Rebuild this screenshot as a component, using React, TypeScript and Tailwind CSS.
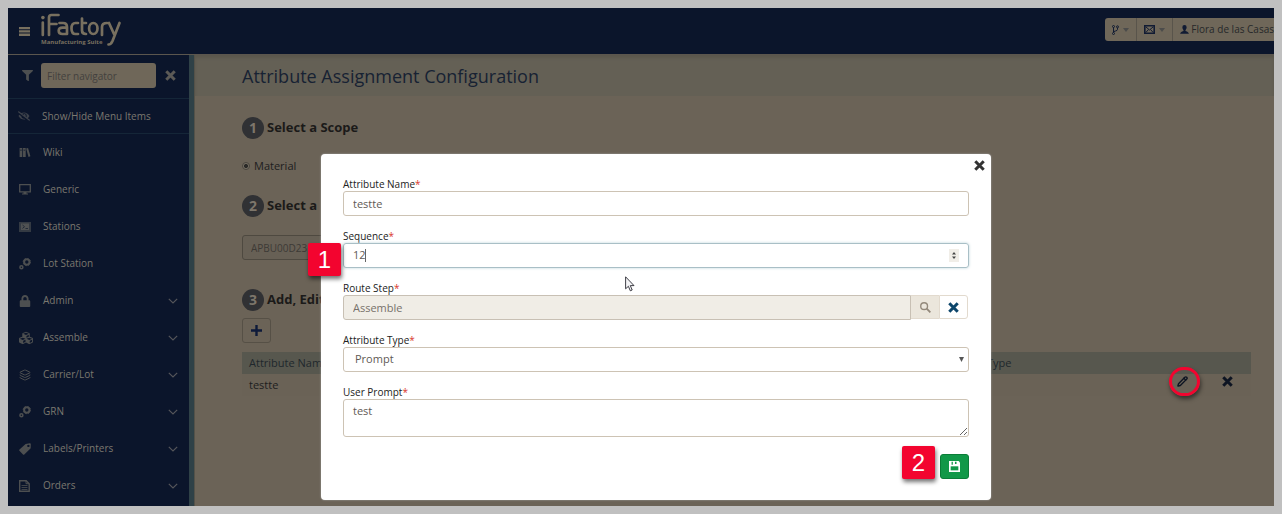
import type { ReactNode } from "react";
import { FaFilter, FaEyeSlash, FaLock, FaCubes } from "react-icons/fa";
import { Layers, Pencil } from "lucide-react";

function BooksIcon() {
  return (
    <svg viewBox="0 0 12 10" className="h-[9px] w-3" fill="currentColor" aria-hidden="true">
      <path d="M0 0h3v10H0zM3.800 0h3v10h-3z" />
      <path d="M7.300 .6 9.400 0 12 9.300 9.900 10z" />
      <path d="M.6 2h1.800v.8H.6zM4.400 2h1.800v.8H4.400z" fill="#0b152b" />
    </svg>
  );
}

function MonitorIcon() {
  return (
    <svg viewBox="0 0 12 11" className="h-[11px] w-3" aria-hidden="true">
      <path d="M.7 .7h10.600v7.100H.7z" fill="none" stroke="currentColor" strokeWidth="1.300" />
      <path d="M4.500 8h3v1.500H9v1H3v-1h1.500z" fill="currentColor" />
    </svg>
  );
}

function TerminalIcon() {
  return (
    <svg viewBox="0 0 12 10" className="h-[10px] w-3" aria-hidden="true">
      <path d="M0 0h12v10H0z" fill="#343a43" />
      <path d="M2 1.500h8v6.500H2z" fill="#505253" />
      <path d="M3.500 3l2 1.700-2 1.700M6.500 6.500h2.500" stroke="#222a38" fill="none" />
    </svg>
  );
}

function FileIcon() {
  return (
    <svg viewBox="0 0 11 12" className="h-3 w-[11px]" fill="none" stroke="currentColor" aria-hidden="true">
      <path d="M.7 .7h6.500l3 3v7.600H.7z" strokeWidth="1.400" />
      <path d="M7 .7v3h3" />
      <path d="M2.500 5.500h6M2.500 7.500h6M2.500 9.500h6" strokeWidth=".8" />
    </svg>
  );
}

function TagIcon() {
  return (
    <svg viewBox="0 0 12 12" className="size-3" fill="currentColor" aria-hidden="true">
      <path fillRule="evenodd" d="M6.600 .9 10.800 .3Q11.700 .2 11.800 1.100L11.700 5.300 5.300 11.400Q4.600 12 4 11.400L.4 7.800Q-.1 7.200 .5 6.500zM9.400 1.700a1.200 1.200 0 1 0 .01 0z" />
    </svg>
  );
}

function GearsIcon() {
  return (
    <svg viewBox="0 0 12 12" className="size-3" fill="none" stroke="currentColor" aria-hidden="true">
      <circle cx="7.800" cy="4" r="2.700" strokeWidth="2" />
      <circle cx="7.800" cy="4" r="3.700" strokeWidth=".8" strokeDasharray="1.500 1.400" />
      <circle cx="2.400" cy="9.300" r="1.500" strokeWidth="1.500" />
    </svg>
  );
}

function UserIcon() {
  return (
    <svg viewBox="0 0 10 10" className="size-[9px] text-[#111b33]" fill="currentColor" aria-hidden="true">
      <path d="M5 0q2.400 0 2.400 2.600 0 2-1.300 3.200v.8Q9.800 7.600 9.800 9.800H.2Q.2 7.600 3.900 6.600v-.8Q2.600 4.600 2.600 2.600 2.600 0 5 0z" />
    </svg>
  );
}

function Cross({ className }: { className: string }) {
  return (
    <svg viewBox="0 0 12 12" className={className} fill="none" stroke="currentColor" strokeWidth="3.300" aria-hidden="true">
      <path d="M1.400 1.400l9.200 9.200M10.600 1.400l-9.200 9.200" />
    </svg>
  );
}

function Chevron() {
  return (
    <svg viewBox="0 0 10 6" className="h-[6px] w-[10px] text-[#55565a]" fill="none" stroke="currentColor" strokeWidth="1.200" aria-hidden="true">
      <path d="M.8 .8 5 5 9.200 .8" />
    </svg>
  );
}

function Caret() {
  return (
    <svg viewBox="0 0 6 4" className="h-1 w-[6px]" fill="#4c4c4b" aria-hidden="true">
      <path d="M0 0h6L3 4z" />
    </svg>
  );
}

function Logo() {
  return (
    <svg viewBox="0 0 82 36" className="h-9 w-[82px]" aria-label="iFactory Manufacturing Suite" role="img">
      <g fill="none" stroke="#78705f" strokeWidth="2.700" strokeLinecap="round" strokeLinejoin="round">
        <path d="M1.800 9.500V22M8 22V4.500Q8 2 10.500 2H17.500M8 11h7.500" />
        <path d="M18.500 10h3.500q4 0 4 4V21h-4.500q-3.800 0-3.800-3.200t3.800-3.200H26" />
        <path d="M37 10h-2.500q-4 0-4 5.500t4 5.500H37" />
        <path d="M41 5.500v12q0 3.500 4 3.500M41 10h4" />
        <ellipse cx="52.300" cy="15.500" rx="4.200" ry="5.500" />
        <path d="M61 22v-8q0-4 5-4M68 10l5 11M78.500 10 71.500 28q-1.500 3.500-4 3.500" />
      </g>
      <circle cx="1.900" cy="4.600" r="1.800" fill="#78705f" />
      <text x="0" y="31" fill="#78705f" fontSize="6" fontWeight="700" fontFamily="Open Sans, sans-serif">Manufacturing Suite</text>
    </svg>
  );
}

const menu: { label: string; icon: ReactNode; group?: boolean }[] = [
  { label: "Wiki", icon: <BooksIcon /> },
  { label: "Generic", icon: <MonitorIcon /> },
  { label: "Stations", icon: <TerminalIcon /> },
  { label: "Lot Station", icon: <GearsIcon /> },
  { label: "Admin", icon: <FaLock className="size-3" />, group: true },
  { label: "Assemble", icon: <FaCubes className="size-[14px]" />, group: true },
  { label: "Carrier/Lot", icon: <Layers className="size-3" />, group: true },
  { label: "GRN", icon: <GearsIcon />, group: true },
  { label: "Labels/Printers", icon: <TagIcon />, group: true },
  { label: "Orders", icon: <FileIcon />, group: true },
];

function Sidebar() {
  return (
    <nav className="w-[181px] shrink-0 text-[10px] font-medium text-[#7b786f]">
      <div className="flex h-11 items-center border-b border-[#152638] pb-[2px] pl-[14px] text-[#4d4f50]">
        <FaFilter className="size-[11px]" />
        <input
          aria-label="Filter navigator"
          placeholder="Filter navigator"
          className="ml-2 h-[25px] w-[115px] rounded-[3px] bg-[#6f6759] px-[6px] text-[10px] font-normal placeholder:text-[#43413e]"
        />
        <button aria-label="Clear filter" className="ml-[9px] text-[#5c5a56]"><Cross className="size-[11px]" /></button>
      </div>
      <a href="#items" className="flex h-[35px] items-center border-b border-[#152638] pl-[10px]">
        <span className="w-6 text-[#3c414a]"><FaEyeSlash className="size-3" /></span>
        Show/Hide Menu Items
      </a>
      <ul>
        {menu.map((m) => (
          <li key={m.label}>
            <a href={"#" + m.label} className="flex h-[37px] items-center pr-[11px] pl-[11px]">
              <span className="w-6 text-[#4d4f50]">{m.icon}</span>
              <span className="flex-1">{m.label}</span>
              {m.group && <Chevron />}
            </a>
          </li>
        ))}
      </ul>
    </nav>
  );
}

function Step({ n, children }: { n: number; children: ReactNode }) {
  return (
    <h2 className="flex h-[22px] items-center gap-[3px] text-[13px] font-bold text-[#1b1a19]">
      <span className="flex size-[22px] items-center justify-center rounded-full bg-[#303134] text-sm text-[#7d766b]">{n}</span>
      {children}
    </h2>
  );
}

function Main() {
  return (
    <main className="min-w-0 flex-1 bg-[#6b6357] text-[11px] text-[#1d1d1e]">
      <h1 className="flex h-[41px] items-center bg-[#646055] pl-[47px] text-lg text-[#172233] shadow-[inset_0_3px_3px_#5b574d]">
        Attribute Assignment Configuration
      </h1>
      <div className="pt-[21px] pr-[23px] pl-[47px]">
        <Step n={1}>Select a Scope</Step>
        <label className="mt-[17px] flex h-5 items-center gap-1">
          <input type="radio" defaultChecked className="size-2 appearance-none rounded-full border border-[#4a463f] bg-[radial-gradient(#2b2a28_40%,#777064_55%)]" />
          Material
        </label>
        <div className="mt-[19px]"><Step n={2}>Select a</Step></div>
        <input aria-label="Material number" readOnly value="APBU00D23" className="mt-[18px] block h-[25px] w-[200px] rounded-[3px] border border-[#4e4940] bg-[#676055] px-2 text-[10px] text-[#3d3a35]" />
        <div className="mt-[29px]"><Step n={3}>Add, Edit</Step></div>
        <button aria-label="Add attribute" className="mt-[7px] flex h-[25px] w-[29px] items-center justify-center rounded-[3px] border border-[#565046] text-[#0e1a3a]">
          <svg viewBox="0 0 12 12" className="size-[11px]" stroke="currentColor" strokeWidth="2.600" aria-hidden="true"><path d="M6 0v12M0 6h12" /></svg>
        </button>
        <table className="mt-[9px] w-full table-fixed text-left">
          <thead className="bg-[#57574e] text-[#20272c]">
            <tr className="h-[22px]">
              <th className="pl-[7px] font-normal">Attribute Name</th>
              <th className="w-[174px] font-normal">Type</th>
              <th className="w-[42px]" />
              <th className="w-12" />
            </tr>
          </thead>
          <tbody>
            <tr className="h-[22px] bg-[#6a6256]">
              <td className="pl-[7px]">testte</td>
              <td />
              <td>
                <div className="relative flex h-[22px] items-center justify-center">
                  <button aria-label="Edit testte" className="-mt-2"><Pencil className="size-[11px] text-[#0d1422]" strokeWidth={3} /></button>
                  <span className="absolute -top-[7px] left-2 h-[29px] w-[31px] rounded-full border-3 border-[#f3042f] shadow-[1px_3px_4px_rgba(0,0,0,0.5)]" />
                </div>
              </td>
              <td>
                <button aria-label="Delete testte" className="mx-auto -mt-2 block text-[#0d1422]"><Cross className="size-[11px]" /></button>
              </td>
            </tr>
          </tbody>
        </table>
      </div>
    </main>
  );
}

function Field({ id, label, children }: { id: string; label: string; children: ReactNode }) {
  return (
    <div>
      <label htmlFor={id} className="block text-[10px] leading-[14px] text-[#222]">
        {label}<span className="text-[#d9372c]">*</span>
      </label>
      {children}
    </div>
  );
}

function Badge({ className, children }: { className: string; children: ReactNode }) {
  return (
    <span className={"absolute flex h-[33px] w-[33px] items-center justify-center rounded-[2px] bg-[#f3042f] font-['Liberation_Sans',sans-serif] text-2xl text-white shadow-[1px_3px_4px_rgba(0,0,0,0.55)] " + className}>
      {children}
    </span>
  );
}

const control = "block h-[25px] w-full rounded-[3px] border border-[#cdc3b4] bg-white px-[9px] text-[11px] text-[#5f5a55] outline-none";

function AttributeDialog() {
  return (
    <form role="dialog" aria-label="Edit attribute" className="absolute top-[146px] left-[313px] w-[670px] rounded-[4px] bg-white px-[22px] pt-[23px] pb-[21px] shadow-[0_0_2px_#aaa]">
      <button type="button" aria-label="Close" className="absolute top-[6px] right-[6px] text-[#333]"><Cross className="size-[11px]" /></button>
      <div className="flex flex-col gap-[13px]">
        <Field id="name" label="Attribute Name">
          <input id="name" className={control} defaultValue="testte" />
        </Field>
        <Field id="sequence" label="Sequence">
          <div className="relative flex h-[25px] items-center rounded-[3px] border border-[#a9bfc6] pr-[9px] pl-[9px] shadow-[0_0_3px_#bcd3da]">
            <input id="sequence" inputMode="numeric" className="w-3 text-[11px] text-[#5f5a55] outline-none" defaultValue="12" />
            <span className="h-[13px] w-px bg-[#666]" />
            <span className="ml-auto flex h-[13px] w-[10px] items-center justify-center bg-[#f1eee8]">
              <svg viewBox="0 0 4 7" className="h-[7px] w-1" fill="#444" aria-hidden="true"><path d="M0 2.500 2 0l2 2.500zM0 4.500h4L2 7z" /></svg>
            </span>
          </div>
        </Field>
        <Field id="route" label="Route Step">
          <div className="flex h-[25px]">
            <input id="route" readOnly className="h-[25px] min-w-0 flex-1 rounded-l-[3px] border border-[#c8c0b4] bg-[#f0ede6] px-[9px] text-[11px] text-[#77716a] outline-none" defaultValue="Assemble" />
            <button type="button" aria-label="Search route step" className="flex h-6 w-7 items-center justify-center border-y border-[#e2dace] bg-[#ebe6dc] text-[#93897b]">
              <svg viewBox="0 0 12 12" className="size-[11px]" fill="none" stroke="currentColor" strokeWidth="1.500" aria-hidden="true"><circle cx="4.500" cy="4.500" r="3.700" /><path d="M7.300 7.300 11.300 11.300" strokeWidth="2" /></svg>
            </button>
            <button type="button" aria-label="Clear route step" className="mr-px flex h-6 w-[29px] items-center justify-center rounded-r-[3px] border border-[#e2dace] text-[#0d466b]">
              <Cross className="size-[11px]" />
            </button>
          </div>
        </Field>
        <Field id="type" label="Attribute Type">
          <div className="relative">
            <select id="type" className={control + " appearance-none pl-[11px]"} defaultValue="Prompt"><option>Prompt</option></select>
            <svg viewBox="0 0 5 5" className="pointer-events-none absolute top-[10px] right-[5px] size-[5px]" fill="#555" aria-hidden="true"><path d="M0 0h5L2.500 5z" /></svg>
          </div>
        </Field>
        <Field id="prompt" label="User Prompt">
          <textarea id="prompt" className="block h-[38px] w-full resize-y rounded-[3px] border border-[#cdc3b4] px-[9px] py-[3px] text-[11px] leading-[15px] text-[#5f5a55] outline-none" defaultValue="test" />
        </Field>
      </div>
      <div className="mt-[17px] flex justify-end">
        <button aria-label="Save" className="flex h-[25px] w-[29px] items-center justify-center rounded-[3px] border border-[#0b7d38] bg-[#119848]">
          <svg viewBox="0 0 12 12" className="size-[11px]" aria-hidden="true">
            <path d="M0 0h10.500L12 1.500V12H0z" fill="#fff" />
            <path d="M1.800 5.800h8.400v4.400H1.800z" fill="#119848" />
            <path d="M2.800 .8h1.400v3.200H2.800zM6.500 .8h1.700v2.400H6.500z" fill="#119848" />
          </svg>
        </button>
      </div>
      <Badge className="top-[89px] -left-[13px]">1</Badge>
      <Badge className="right-[56px] bottom-[21px]">2</Badge>
      <svg viewBox="0 0 10 16" className="absolute top-[122px] left-[304px] h-4 w-[10px]" aria-hidden="true">
        <path d="M.6 .8v12l2.800-2.500 1.900 4.500 1.900-.8-1.900-4.400H9z" fill="#f4f4f6" stroke="#2a2a33" strokeWidth=".9" />
      </svg>
    </form>
  );
}

export default function App() {
  const toolButton = "flex h-full items-center justify-center gap-1 border-r border-[#59544b]";
  return (
    <div className="h-screen bg-[#c0c0c0] p-2 font-['Open_Sans',sans-serif]">
      <div className="relative flex h-full flex-col overflow-hidden bg-[#0b152b]">
        <header className="flex h-[47px] shrink-0 items-center border-b border-[#5b564e] pl-[11px]">
          <button aria-label="Toggle menu" className="mr-[11px] text-[#78705f]">
            <svg viewBox="0 0 11 9" className="h-[9px] w-[11px]" fill="currentColor" aria-hidden="true"><path d="M0 0h11v2.300H0zM0 3.300h11v2.300H0zM0 6.600h11V9H0z" /></svg>
          </button>
          <Logo />
          <div className="mb-[3px] ml-auto flex h-[23px] overflow-hidden rounded-l-[3px] bg-[#6f6759] text-[10px] whitespace-nowrap text-[#262829]">
            <button aria-label="Branches" className={toolButton + " w-8"}>
              <svg viewBox="0 0 7 10" className="h-[10px] w-[7px]" fill="none" stroke="#111b33" aria-hidden="true"><circle cx="1.500" cy="1.500" r="1" /><circle cx="5.500" cy="1.800" r="1" /><circle cx="1.500" cy="8.500" r="1" /><path d="M1.500 2.500v5M5.500 3v1.500q0 1-2 1.500t-2 1" /></svg>
              <Caret />
            </button>
            <button aria-label="Messages" className={toolButton + " w-9"}>
              <svg viewBox="0 0 11 9" className="h-[9px] w-[11px]" fill="none" stroke="#111b33" aria-hidden="true"><path d="M.8 .8h9.400v7.400H.8z" strokeWidth="1.600" /><path d="M2 2l3.500 3L9 2M2 7.300 4.500 4.500M9 7.300 6.500 4.500" /></svg>
              <Caret />
            </button>
            <button className="flex h-full items-center gap-[2px] pl-[7px]">
              <UserIcon />
              Flora de las Casas
            </button>
          </div>
        </header>
        <div className="flex min-h-0 flex-1">
          <Sidebar />
          <div className="w-[6px] shrink-0 border-r border-[#545249] bg-[#2f4147]" />
          <Main />
        </div>
        <AttributeDialog />
      </div>
    </div>
  );
}
